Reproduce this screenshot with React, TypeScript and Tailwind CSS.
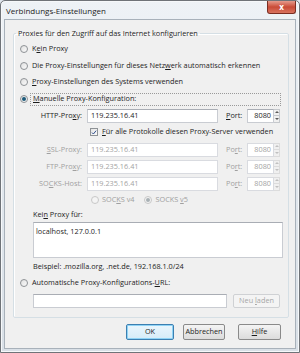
import React from "react";

const ui = "font-['Open_Sans','Noto_Sans',sans-serif] text-[7.3px] leading-none";

function U({ children }: { children: React.ReactNode }) {
  return <span className="underline underline-offset-[1px]">{children}</span>;
}

function Radio({ checked, disabled }: { checked?: boolean; disabled?: boolean }) {
  return (
    <span
      className={`flex h-[8px] w-[8px] shrink-0 items-center justify-center rounded-full border ${
        disabled ? "border-[#c8c8c8] bg-[#f4f4f4]" : "border-[#8e9296] bg-gradient-to-br from-[#e0e0e0] to-[#fbfbfb]"
      }`}
    >
      {checked && (
        <span className={`h-[4px] w-[4px] rounded-full ${disabled ? "bg-[#a8b0b4]" : "bg-[#1d5a7a]"}`} />
      )}
    </span>
  );
}

function TextBox({ value, disabled, className }: { value: string; disabled?: boolean; className: string }) {
  return (
    <div
      className={`flex h-[14px] items-center border bg-white pl-[3px] ${
        disabled
          ? "border-[#d9dbe0] text-[#a3a3a3]"
          : "border-[#c9ccd2] border-t-[#a9adb4] text-[#1c1c1c]"
      } ${className}`}
    >
      <span>{value}</span>
    </div>
  );
}

function PortBox({ disabled }: { disabled?: boolean }) {
  return (
    <div className="flex h-[14px] w-[33px]">
      <div
        className={`flex flex-1 items-center justify-end border bg-white pr-[2px] ${
          disabled ? "border-[#d9dbe0] text-[#a3a3a3]" : "border-[#c9ccd2] border-t-[#a9adb4] text-[#1c1c1c]"
        }`}
      >
        8080
      </div>
      <div className="flex w-[6px] flex-col">
        <div className={`flex flex-1 items-center justify-center border border-l-0 ${disabled ? "border-[#dcdcdc]" : "border-[#c5c8cc]"}`}>
          <span className={`h-0 w-0 border-x-[2px] border-b-[2px] border-x-transparent ${disabled ? "border-b-[#c0c0c0]" : "border-b-[#5a5a5a]"}`} />
        </div>
        <div className={`flex flex-1 items-center justify-center border border-t-0 border-l-0 ${disabled ? "border-[#dcdcdc]" : "border-[#c5c8cc]"}`}>
          <span className={`h-0 w-0 border-x-[2px] border-t-[2px] border-x-transparent ${disabled ? "border-t-[#c0c0c0]" : "border-t-[#5a5a5a]"}`} />
        </div>
      </div>
    </div>
  );
}

function ProxyRow({
  label,
  value,
  disabled,
  portLabel,
}: {
  label: React.ReactNode;
  value: string;
  disabled?: boolean;
  portLabel: React.ReactNode;
}) {
  return (
    <div className="flex h-[17px] items-center">
      <div className={`w-[68px] text-right ${disabled ? "text-[#a0a0a0]" : ""}`}>{label}</div>
      <TextBox value={value} disabled={disabled} className="ml-[5px] w-[131px]" />
      <div className={`ml-[8px] w-[21px] ${disabled ? "text-[#a0a0a0]" : ""}`}>{portLabel}</div>
      <PortBox disabled={disabled} />
    </div>
  );
}

function Button({ children, width, isDefault, disabled }: { children: React.ReactNode; width: string; isDefault?: boolean; disabled?: boolean }) {
  return (
    <div
      className={`flex h-full items-center justify-center rounded-[2px] border bg-gradient-to-b ${width} ${
        disabled
          ? "border-[#cfd1d4] from-[#f4f4f4] to-[#f4f4f4] text-[#a6a6a6]"
          : isDefault
          ? "border-[#3c7fb1] from-[#eaf6fd] to-[#d6ecf8] shadow-[inset_0_0_0_1px_#8fd3f5] text-[#1c1c1c]"
          : "border-[#8a8a8a] from-[#f4f4f4] to-[#dcdcdc] text-[#1c1c1c]"
      }`}
    >
      <span>{children}</span>
    </div>
  );
}

export default function App() {
  return (
    <div className={`relative h-[353px] w-[300px] overflow-hidden bg-[#dfe5ec] ${ui}`}>
      <div className="flex h-[353px] flex-col rounded-t-[5px] border border-[#6f7378] bg-gradient-to-b from-[#eef2f6] via-[#e2e8ee] to-[#d9e0e7] shadow-[inset_0_0_0_1px_#f6f8fa]">
        {/* title bar */}
        <div className="flex h-[18px] shrink-0 items-start">
          <div className="ml-[5px] mt-[6px] text-[8px] text-[#1c1c1c]">Verbindungs-Einstellungen</div>
          <div className="ml-auto mr-[3px] flex h-[13px] w-[29px] items-center justify-center rounded-b-[3px] border border-t-0 border-[#7a2d22] bg-gradient-to-b from-[#e59a8c] via-[#c94a36] to-[#d8735f] text-[8px] font-bold text-white">
            x
          </div>
        </div>

        {/* client area */}
        <div className="mb-[3px] ml-[3px] mr-[3px] flex flex-1 flex-col border border-[#a8b1ba] bg-[#f0f0f0] text-[#1c1c1c]">
          <fieldset className="ml-[8px] mr-[6px] mt-[8px] h-[290px] rounded-[2px] border border-[#d5dfe5] px-0 pb-0 pt-[3px] shadow-[inset_1px_1px_0_#fff]">
            <legend className="ml-[2px] px-[2px] leading-[10px]">Proxies für den Zugriff auf das Internet konfigurieren</legend>

            <div className="flex h-[16px] items-center gap-[4px] pl-[6px]">
              <Radio />
              <span>
                K<U>e</U>in Proxy
              </span>
            </div>
            <div className="flex h-[17px] items-center gap-[4px] pl-[6px]">
              <Radio />
              <span>
                Die Proxy-Einstellungen für dieses Netz<U>w</U>erk automatisch erkennen
              </span>
            </div>
            <div className="flex h-[16px] items-center gap-[4px] pl-[6px]">
              <Radio />
              <span>
                <U>P</U>roxy-Einstellungen des Systems verwenden
              </span>
            </div>
            <div className="mt-[1px] flex h-[16px] items-center gap-[2px] pl-[6px]">
              <Radio checked />
              <span className="flex h-[13px] w-[251px] items-center border border-dotted border-[#9a9a9a] pl-[2px]">
                <span>
                  <U>M</U>anuelle Proxy-Konfiguration:
                </span>
              </span>
            </div>

            <ProxyRow
              label={
                <>
                  HTTP-Pro<U>x</U>y:
                </>
              }
              value="119.235.16.41"
              portLabel={
                <>
                  <U>P</U>ort:
                </>
              }
            />

            <div className="flex h-[16px] items-center pl-[76px]">
              <span className="flex h-[8px] w-[8px] items-center justify-center border border-[#8e9296] bg-gradient-to-br from-[#e4e4e4] to-[#fafafa]">
                <svg viewBox="0 0 8 8" className="h-[7px] w-[7px]">
                  <path d="M1.3 4.1 L3.2 6 L6.8 1.6" fill="none" stroke="#2a4a8a" strokeWidth="1.3" />
                </svg>
              </span>
              <span className="ml-[4px]">
                <U>F</U>ür alle Protokolle diesen Proxy-Server verwenden
              </span>
            </div>

            <div className="mt-[1px]">
              <ProxyRow
                disabled
                label={
                  <>
                    <U>S</U>SL-Proxy:
                  </>
                }
                value="119.235.16.41"
                portLabel={
                  <>
                    Po<U>r</U>t:
                  </>
                }
              />
              <ProxyRow
                disabled
                label={
                  <>
                    FTP-Pro<U>x</U>y:
                  </>
                }
                value="119.235.16.41"
                portLabel={
                  <>
                    Po<U>r</U>t:
                  </>
                }
              />
              <ProxyRow
                disabled
                label={
                  <>
                    SO<U>C</U>KS-Host:
                  </>
                }
                value="119.235.16.41"
                portLabel={
                  <>
                    Po<U>r</U>t:
                  </>
                }
              />
            </div>

            <div className="flex h-[16px] items-center pl-[77px] text-[#a0a0a0]">
              <Radio disabled />
              <span className="ml-[3px]">
                SOC<U>K</U>S v4
              </span>
              <span className="ml-[10px]">
                <Radio disabled checked />
              </span>
              <span className="ml-[3px]">
                SOCKS <U>v</U>5
              </span>
            </div>

            <div className="flex h-[14px] items-center pl-[19px]">
              <span>
                Kei<U>n</U> Proxy für:
              </span>
            </div>
            <div className="ml-[19px] h-[36px] w-[250px] border border-[#c9ccd2] border-t-[#a9adb4] bg-white pl-[2px] pt-[5px]">
              localhost, 127.0.0.1
            </div>
            <div className="flex h-[17px] items-center pl-[19px]">
              <span>Beispiel: .mozilla.org, .net.de, 192.168.1.0/24</span>
            </div>

            <div className="flex h-[16px] items-center gap-[4px] pl-[6px]">
              <Radio />
              <span>
                Automatische Proxy-Konfigurations-<U>U</U>RL:
              </span>
            </div>
            <div className="ml-[19px] mt-[3px] flex h-[14px] items-center">
              <TextBox value="" className="w-[194px]" />
              <div className="ml-[6px] h-full">
                <Button width="w-[47px]" disabled>
                  Neu <U>l</U>aden
                </Button>
              </div>
            </div>
          </fieldset>

          <div className="ml-[121px] mt-[6px] flex h-[16px]">
            <Button width="w-[48px]" isDefault>
              OK
            </Button>
            <div className="ml-[9px] h-full">
              <Button width="w-[42px]">Abbrechen</Button>
            </div>
            <div className="ml-[13px] h-full">
              <Button width="w-[43px]">
                <U>H</U>ilfe
              </Button>
            </div>
          </div>
        </div>
      </div>
    </div>
  );
}
